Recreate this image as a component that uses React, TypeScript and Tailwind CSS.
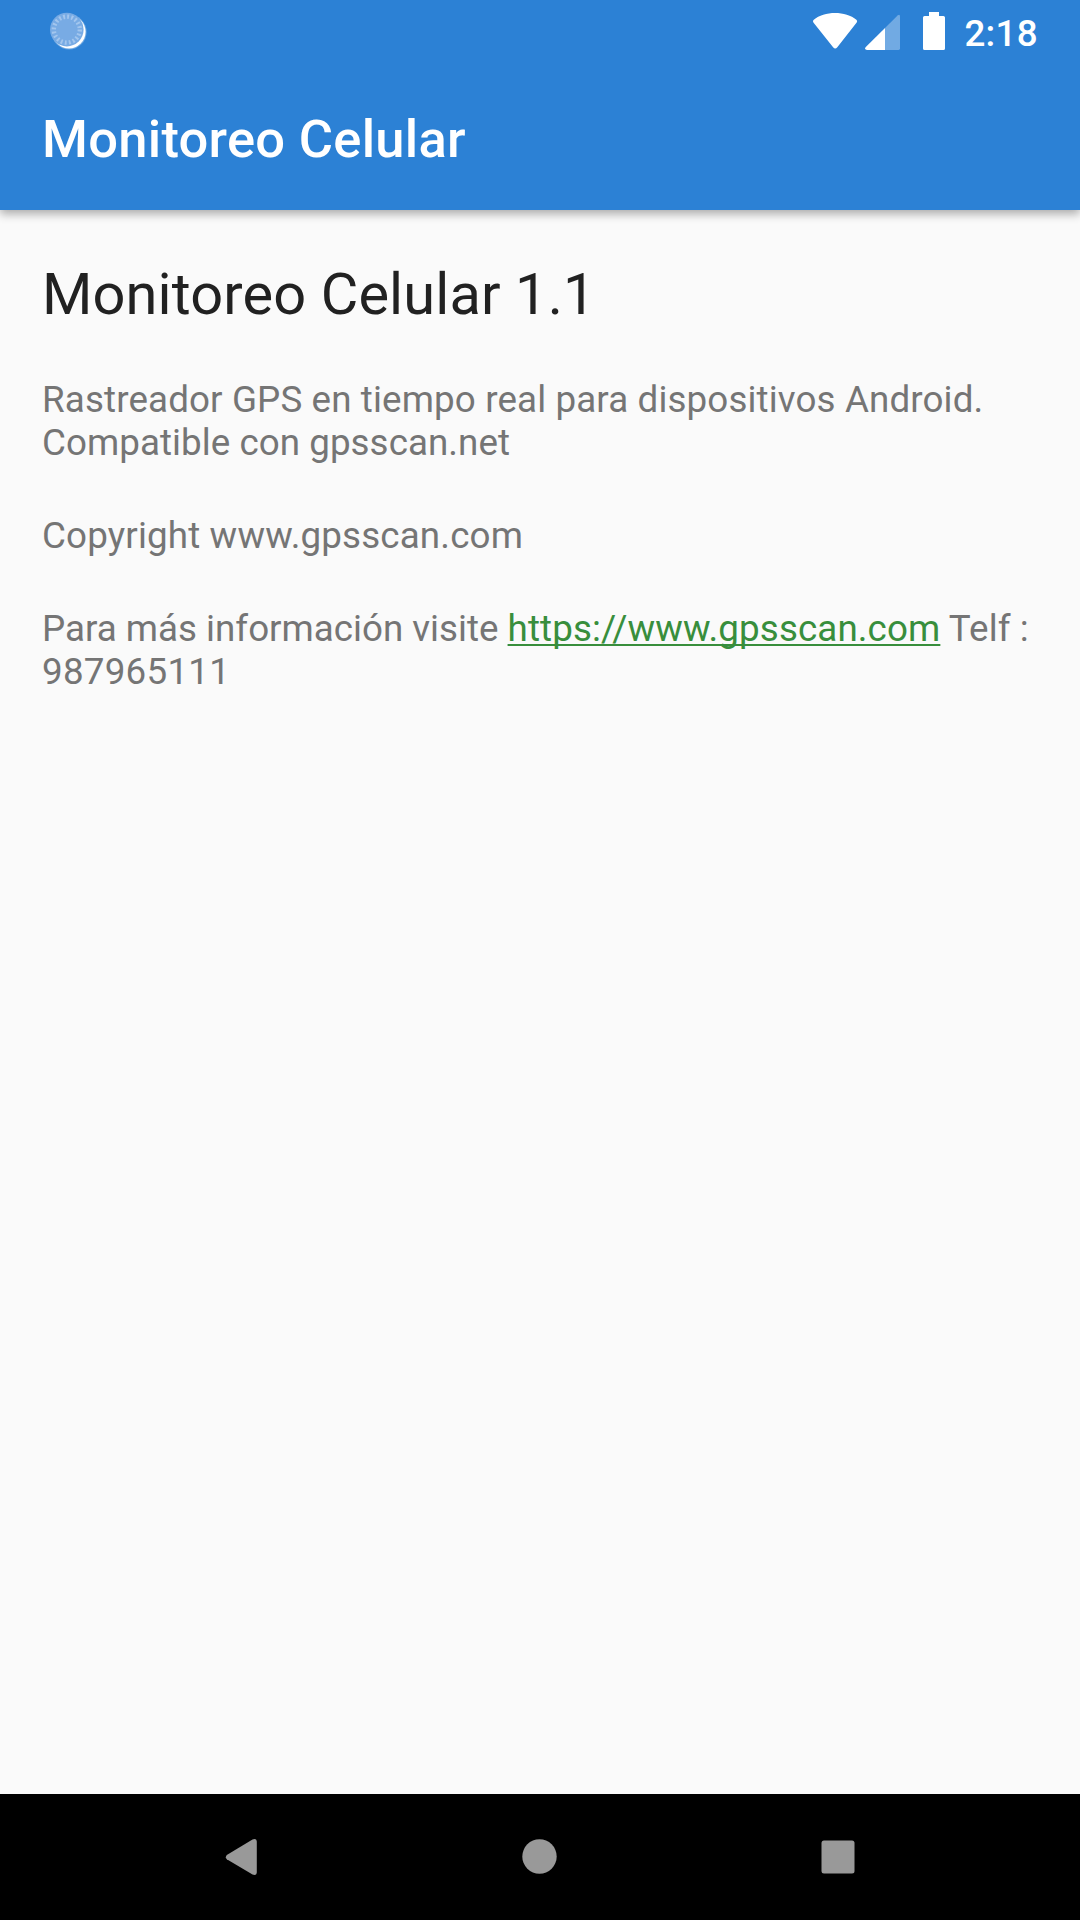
import React from "react";

function SyncIcon() {
  return (
    <svg className="h-[42px] w-[42px]" viewBox="0 0 42 42" aria-hidden="true">
      <circle cx="21.1" cy="21" r="17.5" fill="#fff" opacity="0.3" />
      <circle cx="21" cy="20.8" r="16.6" fill="#fff" />
      <circle cx="18.8" cy="18.6" r="16.8" fill="#78abe4" />
      <circle cx="18.8" cy="18.6" r="13" fill="none" stroke="#a3c6ee" strokeWidth="4.4" strokeDasharray="1.9 2.184" />
    </svg>
  );
}

function StatusBar() {
  return (
    <div className="flex h-[63px] items-start justify-between pl-[48px] pr-[42px]">
      <div className="pt-[11px]">
        <SyncIcon />
      </div>
      <div className="flex items-start">
        <svg className="h-[63px] w-[152px]" viewBox="812 0 152 63" fill="#fff" aria-hidden="true">
          <path d="M813.4 22.5Q812.2 21 813.8 19.8C824 10.8 846 10.8 856.4 19.8Q857.8 21 856.7 22.5L837.3 47.2Q835.2 50 833.1 47.2Z" />
          <path d="M885 28V50H867Q863.8 49.2 865.8 46.9Z" />
          <path d="M885 28L897.6 15.4Q900 13.6 900 16.4V48.6Q900 50 898.6 50H885Z" opacity="0.33" />
          <path d="M929 12H939V16H943.4Q945 16 945 17.6V48.4Q945 50 943.4 50H924.6Q923 50 923 48.4V17.6Q923 16 924.6 16H929Z" />
        </svg>
        <span className="pt-[12px] text-[36.75px] leading-[43px] font-medium tracking-[0.3px]">2:18</span>
      </div>
    </div>
  );
}

function NavBar() {
  return (
    <nav className="flex h-[126px] items-center justify-center bg-black">
      <svg className="h-[126px] w-[1080px]" viewBox="0 0 1080 126" fill="#999" aria-hidden="true">
        <path d="M226.8 61Q224.8 63.3 226.8 65.3L252.5 80.5Q256.8 82 256.8 78V48Q256.8 44 252.5 45.5Z" />
        <circle cx="539.5" cy="62.5" r="17.2" />
        <rect x="821.5" y="46.5" width="33" height="33" rx="2.5" />
      </svg>
    </nav>
  );
}

export default function App() {
  return (
    <div className="flex h-[1920px] w-[1080px] flex-col bg-[#fafafa] font-[Roboto,sans-serif]">
      <header className="h-[210px] bg-[#2c81d5] text-white shadow-[0_4px_9px_rgba(0,0,0,0.32)]">
        <StatusBar />
        <h1 className="pt-[45px] pl-[42px] text-[52.5px] leading-[62px] font-medium tracking-[0.27px] whitespace-nowrap">
          Monitoreo Celular
        </h1>
      </header>
      <main className="flex flex-1 flex-col px-[42px] pt-[50px] text-[36.75px] leading-[43px] text-[#757575]">
        <h2 className="mb-[50px] text-[57.75px] leading-[68px] tracking-[0.12px] text-[#212121]">
          Monitoreo Celular 1.1
        </h2>
        <p className="mb-[50px] whitespace-nowrap">
          <span className="tracking-[0.13px]">Rastreador GPS en tiempo real para dispositivos Android.</span>
          <br />
          <span className="tracking-[0.05px]">Compatible con gpsscan.net</span>
        </p>
        <p className="mb-[50px] tracking-[0.15px]">Copyright www.gpsscan.com</p>
        <p className="whitespace-nowrap">
          Para más información visite{" "}
          <a
            href="https://www.gpsscan.com"
            className="tracking-[0.11px] text-[#388e3c] underline decoration-2 underline-offset-[3px] [text-decoration-skip-ink:none]"
          >
            https://www.gpsscan.com
          </a>
          <span className="tracking-[0.1px]"> Telf :</span>
          <br />
          <span className="tracking-[0.25px]">987965111</span>
        </p>
      </main>
      <NavBar />
    </div>
  );
}
